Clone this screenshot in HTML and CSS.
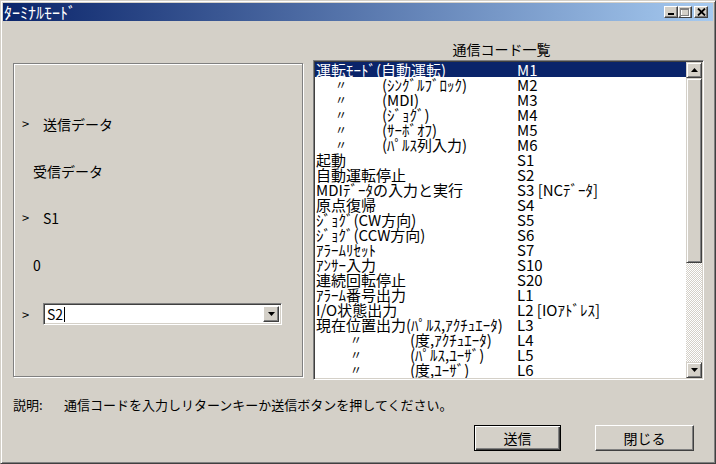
FILE: index.html
```html
<!DOCTYPE html>
<html lang="ja">
  <head>
    <meta charset="utf-8">
    <title>ターミナルモード</title>
    <link rel="stylesheet" href="styles.css">
  </head>
  <body>
    <div class="window">
      <div class="titlebar">
        <span class="title-text">ﾀｰﾐﾅﾙﾓｰﾄﾞ</span>
        <div class="title-btns">
          <button class="tbtn">
            <svg width="8" height="8" viewBox="0 0 8 8"><rect x="1" y="5" width="6" height="2" fill="#000"/></svg>
          </button>
          <button class="tbtn">
            <svg width="10" height="9" viewBox="0 0 10 9">
              <rect x="1.5" y="1.5" width="8" height="7" fill="none" stroke="#fff"/>
              <rect x="0.5" y="0.5" width="8" height="7" fill="none" stroke="#808080"/>
              <rect x="0" y="1" width="9" height="1" fill="#808080"/>
            </svg>
          </button>
          <button class="tbtn close">
            <svg width="9" height="8" viewBox="0 0 9 8"><path d="M1 0.5 L8 7.5 M8 0.5 L1 7.5" stroke="#000" stroke-width="1.8"/></svg>
          </button>
        </div>
      </div>

      <div class="client">
        <div class="main">
          <div class="group">
            <div class="line"><span class="mark">&gt;</span>送信データ</div>
            <div class="line plain">受信データ</div>
            <div class="line"><span class="mark">&gt;</span>S1</div>
            <div class="line plain">0</div>
            <div class="line combo-line">
              <span class="mark">&gt;</span>
              <div class="combo">
                <span class="combo-text">S2</span><span class="caret"></span>
                <button class="drop">
                  <svg width="7" height="4" viewBox="0 0 7 4"><path d="M0 0 H7 L3.5 4 Z" fill="#000"/></svg>
                </button>
              </div>
            </div>
          </div>

          <div class="codes">
            <div class="codes-title">通信コード一覧</div>
            <div class="listbox">
              <ul class="rows">
                <li class="row selected"><span>運転ﾓｰﾄﾞ(自動運転)</span><span>M1</span></li>
                <li class="row sub"><span class="ditto">〃</span><span>(ｼﾝｸﾞﾙﾌﾞﾛｯｸ)</span><span>M2</span></li>
                <li class="row sub"><span class="ditto">〃</span><span>(MDI)</span><span>M3</span></li>
                <li class="row sub"><span class="ditto">〃</span><span>(ｼﾞｮｸﾞ)</span><span>M4</span></li>
                <li class="row sub"><span class="ditto">〃</span><span>(ｻｰﾎﾞｵﾌ)</span><span>M5</span></li>
                <li class="row sub"><span class="ditto">〃</span><span>(ﾊﾟﾙｽ列入力)</span><span>M6</span></li>
                <li class="row"><span>起動</span><span>S1</span></li>
                <li class="row"><span>自動運転停止</span><span>S2</span></li>
                <li class="row"><span>MDIﾃﾞｰﾀの入力と実行</span><span>S3 [NCﾃﾞｰﾀ]</span></li>
                <li class="row"><span>原点復帰</span><span>S4</span></li>
                <li class="row"><span>ｼﾞｮｸﾞ(CW方向)</span><span>S5</span></li>
                <li class="row"><span>ｼﾞｮｸﾞ(CCW方向)</span><span>S6</span></li>
                <li class="row"><span>ｱﾗｰﾑﾘｾｯﾄ</span><span>S7</span></li>
                <li class="row"><span>ｱﾝｻｰ入力</span><span>S10</span></li>
                <li class="row"><span>連続回転停止</span><span>S20</span></li>
                <li class="row"><span>ｱﾗｰﾑ番号出力</span><span>L1</span></li>
                <li class="row"><span>I/O状態出力</span><span>L2 [IOｱﾄﾞﾚｽ]</span></li>
                <li class="row"><span>現在位置出力(ﾊﾟﾙｽ,ｱｸﾁｭｴｰﾀ)</span><span>L3</span></li>
                <li class="row sub2"><span class="ditto">〃</span><span>(度,ｱｸﾁｭｴｰﾀ)</span><span>L4</span></li>
                <li class="row sub2"><span class="ditto">〃</span><span>(ﾊﾟﾙｽ,ﾕｰｻﾞ)</span><span>L5</span></li>
                <li class="row sub2"><span class="ditto">〃</span><span>(度,ﾕｰｻﾞ)</span><span>L6</span></li>
              </ul>
              <div class="vscroll">
                <button class="sbtn">
                  <svg width="7" height="4" viewBox="0 0 7 4"><path d="M3.5 0 L7 4 H0 Z" fill="#000"/></svg>
                </button>
                <div class="thumb"></div>
                <div class="track"></div>
                <button class="sbtn">
                  <svg width="7" height="4" viewBox="0 0 7 4"><path d="M0 0 H7 L3.5 4 Z" fill="#000"/></svg>
                </button>
              </div>
            </div>
          </div>
        </div>

        <p class="desc"><span class="desc-label">説明:</span>通信コードを入力しリターンキーか送信ボタンを押してください。</p>

        <div class="actions">
          <button class="btn default send">送信</button>
          <button class="btn close-btn">閉じる</button>
        </div>
      </div>
    </div>
  </body>
</html>
```

FILE: styles.css
```css
* {
  box-sizing: border-box;
}
body {
  margin: 0;
  background-color: #d4d0c8;
  font-family: "Noto Sans CJK JP", "Noto Sans", sans-serif;
  color: #000;
}
button {
  font-family: inherit;
  padding: 0;
  margin: 0;
  cursor: pointer;
}

.window {
  width: 716px;
  height: 464px;
  border: 1px solid;
  border-color: #d4d0c8 #404040 #404040 #d4d0c8;
  box-shadow: inset 1px 1px 0 #fff, inset -1px -1px 0 #808080;
  padding: 2px;
  background-color: #d4d0c8;
  display: flex;
  flex-direction: column;
}

/* title bar */
.titlebar {
  height: 18px;
  background: linear-gradient(to right, #0a246a, #a6caf0);
  display: flex;
  align-items: center;
  justify-content: space-between;
  padding-right: 5px;
}
.title-text {
  color: #fff;
  font-size: 16px;
  line-height: 18px;
  padding-left: 1px;
}
.title-btns {
  display: flex;
}
.tbtn {
  width: 14px;
  height: 12px;
  background-color: #d4d0c8;
  border: 1px solid;
  border-color: #fff #404040 #404040 #fff;
  box-shadow: inset -1px -1px 0 #808080;
  display: flex;
  align-items: center;
  justify-content: center;
}
.tbtn.close {
  margin-left: 2px;
}

/* client area */
.client {
  flex: 1;
  padding: 18px 9px 0 10px;
}
.main {
  display: flex;
  align-items: flex-start;
  gap: 10px;
}

.group {
  width: 290px;
  height: 314px;
  margin-top: 24px;
  border: 1px solid #808080;
  box-shadow: inset 1px 1px 0 #fff, 1px 1px 0 #fff;
  padding: 36px 0 0 8px;
  font-size: 14px;
}
.line {
  height: 47px;
  display: flex;
  align-items: center;
}
.line.plain {
  padding-left: 11px;
}
.mark {
  width: 21px;
  font-size: 13px;
}
.combo-line {
  height: 22px;
  margin-top: 15px;
}
.combo {
  width: 239px;
  height: 22px;
  background-color: #fff;
  border: 1px solid;
  border-color: #808080 #fff #fff #808080;
  box-shadow: inset 1px 1px 0 #404040, inset -1px -1px 0 #d4d0c8;
  padding: 2px 2px 2px 3px;
  display: flex;
  align-items: center;
}
.combo-text {
  font-size: 14px;
  line-height: 16px;
}
.caret {
  width: 1px;
  height: 15px;
  background-color: #000;
  margin-left: 1px;
}
.drop {
  margin-left: auto;
  width: 16px;
  height: 16px;
  background-color: #d4d0c8;
  border: 1px solid;
  border-color: #fff #404040 #404040 #fff;
  box-shadow: inset -1px -1px 0 #808080;
  display: flex;
  align-items: center;
  justify-content: center;
}

/* code list */
.codes {
  width: 391px;
}
.codes-title {
  height: 21px;
  line-height: 21px;
  font-size: 14px;
  text-align: center;
  padding-right: 14px;
}
.listbox {
  height: 320px;
  border: 1px solid;
  border-color: #808080 #fff #fff #808080;
  box-shadow: inset 1px 1px 0 #404040, inset -1px -1px 0 #d4d0c8;
  padding: 1px;
  display: flex;
}
.rows {
  list-style: none;
  margin: 0;
  padding: 0;
  flex: 1;
  overflow: hidden;
  background-color: #fff;
}
.row {
  display: grid;
  grid-template-columns: 201px auto;
  height: 15px;
  line-height: 15px;
  font-size: 15px;
  padding-left: 1px;
  white-space: nowrap;
}
.row.sub {
  grid-template-columns: 66px 135px auto;
}
.row.sub .ditto {
  padding-left: 19px;
}
.row.sub2 {
  grid-template-columns: 94px 107px auto;
}
.row.sub2 .ditto {
  padding-left: 34px;
}
.ditto {
  font-size: 12px;
}
.row.selected {
  background-color: #0a246a;
  color: #fff;
}

.vscroll {
  width: 16px;
  display: flex;
  flex-direction: column;
}
.sbtn {
  width: 16px;
  height: 16px;
  background-color: #d4d0c8;
  border: 1px solid;
  border-color: #d4d0c8 #404040 #404040 #d4d0c8;
  box-shadow: inset 1px 1px 0 #fff, inset -1px -1px 0 #808080;
  display: flex;
  align-items: center;
  justify-content: center;
}
.thumb {
  height: 185px;
  background-color: #d4d0c8;
  border: 1px solid;
  border-color: #d4d0c8 #404040 #404040 #d4d0c8;
  box-shadow: inset 1px 1px 0 #fff, inset -1px -1px 0 #808080;
}
.track {
  flex: 1;
  background: repeating-conic-gradient(#fff 0 25%, #d4d0c8 0 50%) 0 0 / 2px 2px;
}

/* bottom */
.desc {
  margin: 17px 0 0 0;
  font-size: 13px;
  line-height: 16px;
  white-space: nowrap;
}
.desc-label {
  display: inline-block;
  width: 51px;
}
.actions {
  margin-top: 12px;
  display: flex;
  justify-content: flex-end;
  gap: 34px;
  padding-right: 10px;
}
.btn {
  height: 26px;
  font-size: 14px;
  background-color: #d4d0c8;
  border: 1px solid;
  border-color: #fff #404040 #404040 #fff;
  box-shadow: inset -1px -1px 0 #808080;
}
.btn.default {
  border-color: #000;
  box-shadow: inset 1px 1px 0 #fff, inset -1px -1px 0 #404040, inset -2px -2px 0 #808080;
}
.send {
  width: 87px;
}
.close-btn {
  width: 99px;
}
```
